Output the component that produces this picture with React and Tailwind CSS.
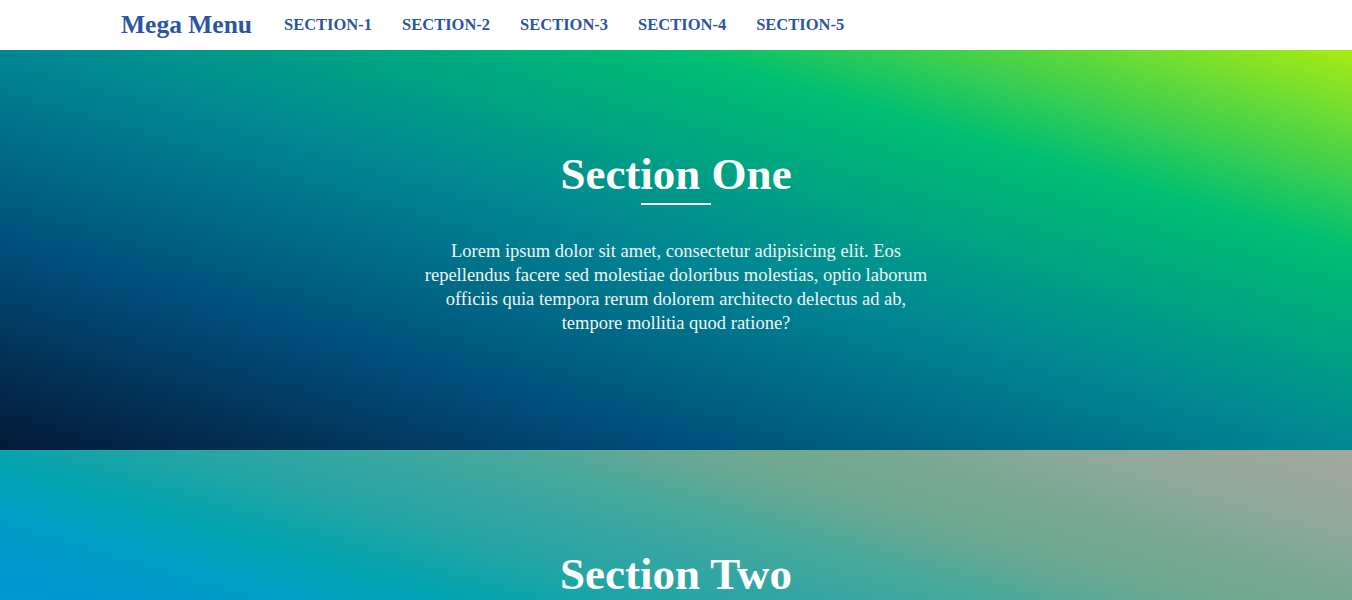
import React from 'react';

const links = ['SECTION-1', 'SECTION-2', 'SECTION-3', 'SECTION-4', 'SECTION-5'];

function Section({ title, bg, children }) {
  return (
    <section className={`h-[400px] pt-[98px] flex flex-col items-center text-white ${bg}`}>
      <h2 className="text-[45px] leading-[52px] font-bold">{title}</h2>
      <div className="w-[70px] h-[2px] bg-white mt-[3px]" />
      {children}
    </section>
  );
}

export default function App() {
  return (
    <div className="h-[600px] overflow-hidden font-['Liberation_Serif','Times_New_Roman',serif]">
      {/* Navbar */}
      <nav className="h-[50px] bg-white">
        <div className="max-w-[1140px] mx-auto px-[15px] h-full flex items-center">
          <a href="#" className="text-[25.5px] font-bold text-[#2b55a1] mr-[17px]">Mega Menu</a>
          <ul className="flex items-center">
            {links.map((l) => (
              <li key={l}>
                <a href="#" className="block px-[15px] text-[16.5px] font-bold text-[#2b55a1]">{l}</a>
              </li>
            ))}
          </ul>
        </div>
      </nav>

      <Section
        title="Section One"
        bg="bg-[linear-gradient(to_right_top,#051937,#004d7a,#008793,#00bf72,#a8eb12)]"
      >
        <p className="w-[516px] mt-[34px] text-center text-[18.5px] leading-[24px] text-[#f2f4f4]">
          Lorem ipsum dolor sit amet, consectetur adipisicing elit. Eos repellendus facere sed molestiae doloribus molestias, optio laborum officiis quia tempora rerum dolorem architecto delectus ad ab, tempore mollitia quod ratione?
        </p>
      </Section>

      <Section
        title="Section Two"
        bg="bg-[linear-gradient(to_right_top,#0088e4_0%,#0095d5_32%,#009ec4_42%,#00a2b0_48%,#20a5a5_55%,#36a6a2_62%,#48a89c_68%,#62a894_73%,#70a890_77%,#78a892_82%,#8aa99a_88%,#a4a79c_100%)]"
      />
    </div>
  );
}
